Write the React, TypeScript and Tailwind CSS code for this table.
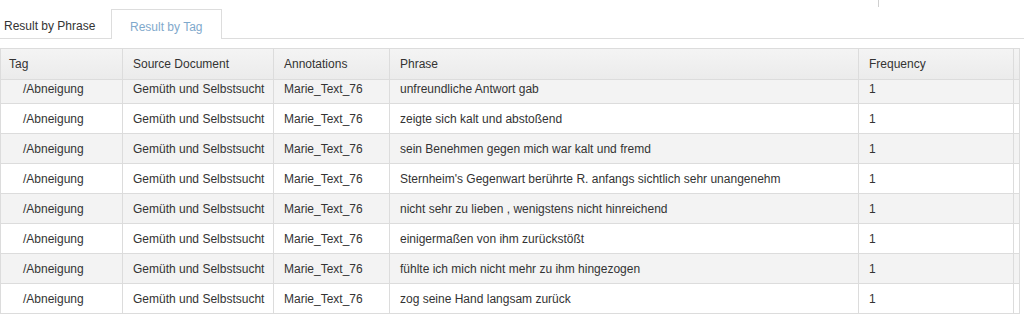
const ROWS = [
  "unfreundliche Antwort gab",
  "zeigte sich kalt und abstoßend",
  "sein Benehmen gegen mich war kalt und fremd",
  "Sternheim's Gegenwart berührte R. anfangs sichtlich sehr unangenehm",
  "nicht sehr zu lieben , wenigstens nicht hinreichend",
  "einigermaßen von ihm zurückstößt",
  "fühlte ich mich nicht mehr zu ihm hingezogen",
  "zog seine Hand langsam zurück",
]

const COLS = [
  { label: "Tag", w: "w-[122px]" },
  { label: "Source Document", w: "w-[151px]" },
  { label: "Annotations", w: "w-[116px]" },
  { label: "Phrase", w: "w-[469px]" },
  { label: "Frequency", w: "w-[155px]" },
  { label: "", w: "w-[6px]" },
]

export default function App() {
  return (
    <div className="w-[1024px] h-[314px] overflow-hidden bg-white font-['Liberation_Sans',Arial,sans-serif] text-[12px] text-[#333]">
      {/* top strip */}
      <div className="relative h-[9px]">
        <div className="absolute left-[878px] top-0 h-[7px] w-px bg-[#d0d0d0]" />
      </div>

      {/* tabs */}
      <div className="flex h-[30px] border-b border-[#dddddd]">
        <div className="w-[111px] pl-[4px] pt-[8px] text-[#333]">Result by Phrase</div>
        <div className="-mb-px w-[111px] border border-b-0 border-[#dddddd] bg-white pl-[18px] pt-[8px] text-[#7fa9cc]">
          Result by Tag
        </div>
      </div>

      {/* table */}
      <div className="mt-[9px] w-[1020px] overflow-hidden">
        <table className="w-[1020px] table-fixed border-collapse whitespace-nowrap">
          <colgroup>
            {COLS.map((c, i) => (
              <col key={i} className={c.w} />
            ))}
          </colgroup>
          <thead>
            <tr className="h-[31px] bg-gradient-to-b from-[#f4f4f4] to-[#ebebeb]">
              {COLS.map((c, i) => (
                <th
                  key={i}
                  className="overflow-hidden border border-[#dcdcdc] px-[10px] text-left font-normal text-[12px] text-[#333]"
                >
                  {i === 0 ? <span className="-ml-[2px]">{c.label}</span> : c.label}
                </th>
              ))}
            </tr>
          </thead>
          <tbody>
            {ROWS.map((p, i) => {
              const first = i === 0 ? "pb-[5px]" : ""
              return (
                <tr
                  key={i}
                  className={`${i === 0 ? "h-[24px]" : "h-[30px]"} ${i % 2 === 0 ? "bg-[#f3f3f3]" : "bg-white"}`}
                >
                  <td className={`overflow-hidden border border-[#dcdcdc] pl-[22px] ${first}`}>/Abneigung</td>
                  <td className={`overflow-hidden border border-[#dcdcdc] px-[10px] ${first}`}>Gemüth und Selbstsucht</td>
                  <td className={`overflow-hidden border border-[#dcdcdc] px-[10px] ${first}`}>Marie_Text_76</td>
                  <td className={`overflow-hidden border border-[#dcdcdc] px-[10px] ${first}`}>{p}</td>
                  <td className={`overflow-hidden border border-[#dcdcdc] px-[10px] ${first}`}>1</td>
                  <td className="border border-[#dcdcdc]" />
                </tr>
              )
            })}
          </tbody>
        </table>
      </div>
    </div>
  )
}
